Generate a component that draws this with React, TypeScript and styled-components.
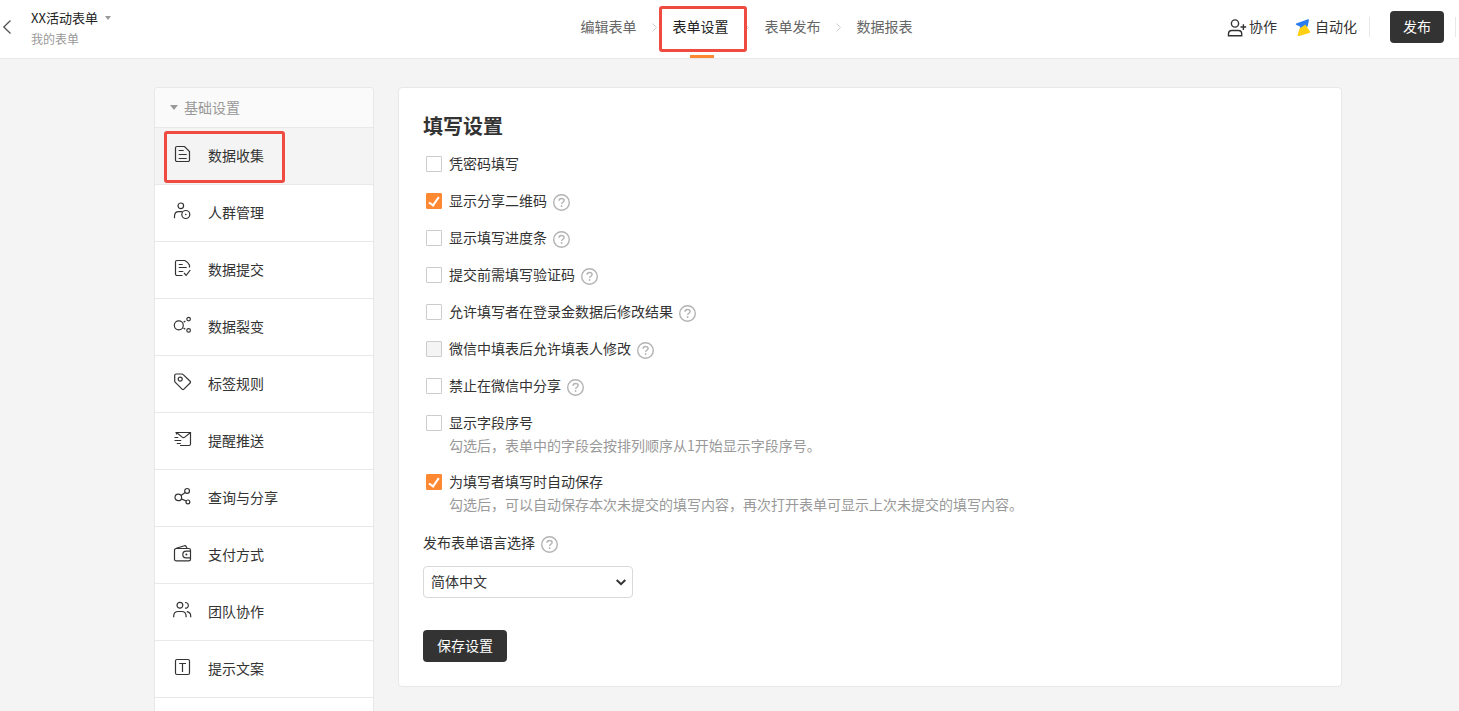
import React from "react";
import styled, { createGlobalStyle } from "styled-components";

const GlobalStyle = createGlobalStyle`
  *, *::before, *::after { box-sizing: border-box; }
  body {
    margin: 0;
    background: #f4f4f4;
    color: #333;
    font: 14px/24px "Noto Sans CJK SC", "Liberation Sans", sans-serif;
  }
  button, select, input { font: inherit; color: inherit; margin: 0; }
  a { color: inherit; text-decoration: none; }
  ul, ol { list-style: none; margin: 0; padding: 0; }
`;

const Page = styled.div`
  display: flex;
  flex-direction: column;
  min-height: 100vh;
`;

/* One line of label text, raised slightly against the icons beside it. */
const Text = styled.span`
  display: block;
  padding-bottom: 2px;
  line-height: 22px;
`;

/* ---------- top bar ---------- */

const TopBar = styled.header`
  display: flex;
  align-items: stretch;
  height: 59px;
  background: #fff;
  border-bottom: 1px solid #e8e8e8;
`;

const TopLeft = styled.div`
  flex: 1 1 37px;
  display: flex;
  align-items: center;
  padding-bottom: 2px;
`;

const BackButton = styled.button`
  display: flex;
  align-items: center;
  width: 31px;
  height: 100%;
  padding: 0 0 2px 2px;
  border: 0;
  background: none;
  cursor: pointer;
`;

const FormName = styled.button`
  display: flex;
  align-items: center;
  gap: 7px;
  padding: 0;
  border: 0;
  background: none;
  font-size: 13px;
  line-height: 21px;
  color: #222;
  cursor: pointer;
`;

const FolderName = styled.a`
  display: block;
  font-size: 12px;
  line-height: 21px;
  color: #999;
`;

const Caret = styled.span<{ $size: number }>`
  border: ${(p) => p.$size}px solid transparent;
  border-top: ${(p) => p.$size + 1}px solid #999;
  border-bottom: 0;
`;

const Steps = styled.ol`
  display: flex;
`;

const Step = styled.li`
  position: relative;
  display: flex;
  align-items: center;
  padding-bottom: 4px;
`;

const StepLink = styled.a<{ $active?: boolean }>`
  color: ${(p) => (p.$active ? "#222" : "#666")};
`;

const StepArrow = styled.li`
  display: flex;
  align-items: center;
  justify-content: center;
  width: 36px;
  padding-bottom: 4px;
`;

const ActiveBar = styled.span`
  position: absolute;
  left: 17px;
  bottom: 0;
  width: 24px;
  height: 3px;
  background: #ff8933;
`;

const Highlight = styled.span`
  position: absolute;
  border: 3px solid #ef4b41;
  border-radius: 3px;
  pointer-events: none;
`;

const StepHighlight = styled(Highlight)`
  top: 6px;
  left: -14px;
  width: 88px;
  height: 46px;
`;

const MenuHighlight = styled(Highlight)`
  top: 3px;
  left: 9px;
  width: 121px;
  height: 52px;
`;

const TopRight = styled.div`
  flex: 1 1 0;
  display: flex;
  align-items: center;
  justify-content: flex-end;
  padding: 0 3px 4px 0;
`;

const ToolLink = styled.a`
  display: flex;
  align-items: center;
  gap: 2px;
  & + & { margin-left: 18px; }
`;

const Divider = styled.span`
  width: 1px;
  height: 20px;
  margin-left: 12px;
  background: #e8e8e8;

  &:last-child { margin-left: 11px; }
`;

const DarkButton = styled.button`
  height: 32px;
  padding: 0 14px 2px;
  border: 0;
  border-radius: 4px;
  background: #333;
  color: #fff;
  line-height: 30px;
  cursor: pointer;
`;

const PublishButton = styled(DarkButton)`
  margin-left: 20px;
  padding: 0 13px 2px;
`;

/* ---------- body ---------- */

const Workspace = styled.div`
  flex: 1;
  display: flex;
  gap: 24px;
  padding: 28px 117px 0 154px;
`;

const Sidebar = styled.nav`
  flex: 0 0 220px;
  background: #fff;
  border: 1px solid #e8e8e8;
  border-bottom: 0;
  border-radius: 4px 4px 0 0;
`;

const GroupButton = styled.button`
  display: flex;
  align-items: center;
  gap: 6px;
  width: 100%;
  height: 40px;
  padding: 0 15px;
  border: 0;
  border-bottom: 1px solid #e8e8e8;
  border-radius: 4px 4px 0 0;
  background: #fafafa;
  color: #999;
  cursor: pointer;
`;

const MenuItem = styled.li`
  position: relative;
  border-bottom: 1px solid #e8e8e8;
`;

const MenuLink = styled.a<{ $active?: boolean }>`
  display: flex;
  align-items: center;
  gap: 16px;
  height: 56px;
  padding-left: 17px;
  background: ${(p) => (p.$active ? "#f4f4f4" : "#fff")};
`;

const Panel = styled.main`
  flex: 1;
  align-self: flex-start;
  padding: 24px;
  background: #fff;
  border: 1px solid #e8e8e8;
  border-radius: 4px;
`;

const PanelTitle = styled.h1`
  margin: 0 0 12px;
  font-size: 20px;
  line-height: 28px;
  font-weight: 700;
`;

const Option = styled.div`
  margin-bottom: 13px;
`;

const OptionRow = styled.div`
  display: flex;
  align-items: center;
  gap: 6px;
`;

const OptionLabel = styled.label`
  display: flex;
  align-items: center;
  gap: 7px;
  padding-left: 3px;
`;

const LanguageRow = styled(OptionRow)`
  padding-top: 2px;
  margin-bottom: 11px;
`;

const Checkbox = styled.input`
  appearance: none;
  display: grid;
  place-items: center;
  width: 16px;
  height: 16px;
  border: 1px solid #ccc;
  border-radius: 1px;
  background: #fff;

  &:checked {
    border-color: #ff8933;
    background: #ff8933;
  }
  &:checked::after {
    content: "";
    width: 6px;
    height: 11px;
    margin-bottom: 2px;
    border: solid #fff;
    border-width: 0 2px 2px 0;
    transform: rotate(35deg);
  }
  &:disabled { background: #f4f4f4; }
`;

const Hint = styled.p`
  margin: 0;
  padding: 0 0 2px 26px;
  line-height: 20px;
  color: #999;
`;

const HelpButton = styled.button`
  display: flex;
  padding: 2px 0 0;
  border: 0;
  background: none;
  cursor: help;
`;

const SelectBox = styled.div`
  position: relative;
  width: 210px;
  margin-bottom: 32px;

  svg {
    position: absolute;
    top: 13px;
    right: 7px;
    pointer-events: none;
  }
`;

const LanguageSelect = styled.select`
  appearance: none;
  display: block;
  width: 100%;
  height: 32px;
  padding: 0 24px 2px 7px;
  border: 1px solid #d9d9d9;
  border-radius: 4px;
  background: #fff;
`;

/* ---------- icons ---------- */

const Help = () => (
  <HelpButton type="button" aria-label="帮助">
    <svg width="17" height="17" viewBox="0 0 17 17" fill="none" stroke="#b3b3b3" aria-hidden="true">
      <circle cx="8.5" cy="8.5" r="7.8" strokeWidth="1.4" />
      <path d="M6 6.8C6 5.300 7.100 4.500 8.600 4.500s2.500.9 2.500 2.100c0 1.600-2.400 1.700-2.400 3.300" strokeWidth="1.4" />
      <circle cx="8.6" cy="12" r=".9" fill="#b3b3b3" stroke="none" />
    </svg>
  </HelpButton>
);

const Line = ({ children, weight = 1.2 }: { children: React.ReactNode; weight?: number }) => (
  <svg
    width="20"
    height="20"
    viewBox="0 0 20 20"
    fill="none"
    stroke="#333"
    strokeWidth={weight}
    overflow="visible"
    aria-hidden="true"
  >
    {children}
  </svg>
);

const icons = {
  document: (
    <Line>
      <path d="M12.5.5H5A1.5 1.5 0 0 0 3.5 2v12A1.5 1.5 0 0 0 5 15.5h11a1.5 1.5 0 0 0 1.5-1.500V5.500z" />
      <path d="M6.7 4.5h5M6.7 8.500h8M6.7 12.500h8" />
    </Line>
  ),
  crowd: (
    <Line>
      <circle cx="8.8" cy="2.8" r="2.8" />
      <path d="M2.5 15.3v-1.8c0-3 1.8-4.8 4.3-4.8h3.7" />
      <circle cx="13.8" cy="11.5" r="4" />
      <circle cx="13.8" cy="11.5" r=".8" fill="#333" stroke="none" />
    </Line>
  ),
  submit: (
    <Line>
      <path d="M10.5 15.5H5A1.5 1.5 0 0 1 3.5 14V2A1.5 1.5 0 0 1 5 .5h7.800c2 1 4 2.700 4.700 4.800v2.200" />
      <path d="M6.7 4.5h4M6.7 7.500h8M6.7 11.500h4.600M12 13l2.200 2.400L18.300 10" />
    </Line>
  ),
  fission: (
    <Line>
      <circle cx="6.8" cy="8.3" r="4.5" />
      <circle cx="16.6" cy="2.1" r="1.8" />
      <circle cx="16.6" cy="13.4" r="1.8" />
      <path d="M11.6 5.2l1.8-1.3M11.5 11l1.8 1.3" />
    </Line>
  ),
  tag: (
    <Line>
      <path d="M2.7 1.5A1.5 1.5 0 0 1 4.2 0h5.6c.6 0 1 .2 1.4.6l6.9 6.6c.6.6.6 1.2 0 1.8l-6.2 6.1c-.6.6-1.2.6-1.8 0L3.3 8.4c-.4-.4-.6-.8-.6-1.4z" />
      <circle cx="8.2" cy="5.2" r="2" />
    </Line>
  ),
  mail: (
    <Line>
      <path d="M8 14.5h9a1.5 1.5 0 0 0 1.5-1.5V1.500H4.500l5.700 4.600c.9.7 1.700.7 2.600 0l5.700-4.600" />
      <path d="M4.5 1.5v2M2.5 6.500h3.800M2.5 9.500h6.800M4.8 12.500h4" />
    </Line>
  ),
  share: (
    <Line>
      <circle cx="6.3" cy="9.4" r="3.3" />
      <circle cx="15.1" cy="2.9" r="2.4" />
      <circle cx="15.9" cy="13.9" r="1.9" />
      <path d="M9 7.4l4.2-3M9.3 10.9l4.9 2.1" />
    </Line>
  ),
  wallet: (
    <Line>
      <path d="M4.2 3.5h12.6a1.7 1.7 0 0 1 1.7 1.7v9a1.7 1.7 0 0 1-1.7 1.7H4.2a1.7 1.7 0 0 1-1.7-1.7v-9a1.7 1.7 0 0 1 1.7-1.7z" />
      <path d="M4.2 3.3l8.3-2.6c.7-.2 1.2 0 1.5.6l1 2M18.5 6.2h-4.4a3.3 3.3 0 0 0 0 6.6h4.4" />
      <circle cx="14.4" cy="9.5" r="1" fill="#333" stroke="none" />
    </Line>
  ),
  team: (
    <Line>
      <circle cx="7.9" cy="3.3" r="2.9" />
      <path d="M13 .5c2 0 3.3 1.2 3.3 2.900S15 6.200 13 6.200" />
      <path d="M1.700 15.300v-1.200c0-2.700 1.900-4.600 4.600-4.600h3.200c2.700 0 4.600 1.900 4.600 4.600v1.200M14.800 9.700c2.500.3 3.900 2 3.900 4.400v1.200" />
    </Line>
  ),
  text: (
    <Line>
      <rect x="3.5" y=".5" width="14" height="15" rx="1.5" />
      <path d="M7.2 4.500h6.800M10.500 4.500v8.500" />
    </Line>
  ),
};

const StepChevron = () => (
  <svg width="5" height="9" viewBox="0 0 5 9" fill="none" stroke="#ccc" aria-hidden="true">
    <path d="M.5.5l4 4-4 4" />
  </svg>
);

/* ---------- data ---------- */

const steps = ["编辑表单", "表单设置", "表单发布", "数据报表"];
const activeStep = "表单设置";

const menu: { label: string; icon: keyof typeof icons }[] = [
  { label: "数据收集", icon: "document" },
  { label: "人群管理", icon: "crowd" },
  { label: "数据提交", icon: "submit" },
  { label: "数据裂变", icon: "fission" },
  { label: "标签规则", icon: "tag" },
  { label: "提醒推送", icon: "mail" },
  { label: "查询与分享", icon: "share" },
  { label: "支付方式", icon: "wallet" },
  { label: "团队协作", icon: "team" },
  { label: "提示文案", icon: "text" },
];
const activeMenu = "数据收集";

type OptionData = {
  id: string;
  label: string;
  checked?: boolean;
  disabled?: boolean;
  help?: boolean;
  hint?: string;
};

const options: OptionData[] = [
  { id: "password", label: "凭密码填写" },
  { id: "qrcode", label: "显示分享二维码", checked: true, help: true },
  { id: "progress", label: "显示填写进度条", help: true },
  { id: "captcha", label: "提交前需填写验证码", help: true },
  { id: "edit-login", label: "允许填写者在登录金数据后修改结果", help: true },
  { id: "edit-wechat", label: "微信中填表后允许填表人修改", disabled: true, help: true },
  { id: "no-share", label: "禁止在微信中分享", help: true },
  {
    id: "numbering",
    label: "显示字段序号",
    hint: "勾选后，表单中的字段会按排列顺序从1开始显示字段序号。",
  },
  {
    id: "autosave",
    label: "为填写者填写时自动保存",
    checked: true,
    hint: "勾选后，可以自动保存本次未提交的填写内容，再次打开表单可显示上次未提交的填写内容。",
  },
];

export default function App() {
  return (
    <Page>
      <GlobalStyle />
      <TopBar>
        <TopLeft>
          <BackButton type="button" aria-label="返回">
            <svg width="10" height="14" viewBox="0 0 10 14" fill="none" stroke="#555" strokeWidth="1.3" aria-hidden="true">
              <path d="M8.5.5L1.8 7l6.7 6.5" />
            </svg>
          </BackButton>
          <div>
            <FormName type="button">
              XX活动表单
              <Caret $size={3} />
            </FormName>
            <FolderName href="#">我的表单</FolderName>
          </div>
        </TopLeft>

        <Steps>
          {steps.map((step, i) => (
            <React.Fragment key={step}>
              {i > 0 && (
                <StepArrow aria-hidden="true">
                  <StepChevron />
                </StepArrow>
              )}
              <Step>
                <StepLink href="#" $active={step === activeStep}>
                  <Text>{step}</Text>
                </StepLink>
                {step === activeStep && (
                  <>
                    <ActiveBar />
                    <StepHighlight />
                  </>
                )}
              </Step>
            </React.Fragment>
          ))}
        </Steps>

        <TopRight>
          <ToolLink href="#">
            <Line weight={1.4}>
              <circle cx="8" cy="6.5" r="3.6" />
              <path d="M1.5 18.7v-1.900c0-2 1.400-3.300 3.400-3.300h6.400c2 0 3.400 1.300 3.400 3.300v1.900zM13.500 10h5.700M16.400 7.200v5.700" />
            </Line>
            <Text>协作</Text>
          </ToolLink>
          <ToolLink href="#">
            <svg width="18" height="18" viewBox="0 0 18 18" aria-hidden="true">
              <path d="M1.200 5.400L13 1.300c.7-.2 1.100.2 1 .8l-1.400 6.500-7.800 2.600.5-2.400-3.700-1.800c-.9-.5-1.100-1.300-.4-1.600z" fill="#2b7cf0" />
              <path d="M10.300 6.400l4.600 6.900c.4.700.2 1.300-.5 1.600L4 18.100c-1 .3-1.700-.4-1.400-1.400l2-6.100z" fill="#ffd012" />
            </svg>
            <Text>自动化</Text>
          </ToolLink>
          <Divider />
          <PublishButton type="button">发布</PublishButton>
          <Divider />
        </TopRight>
      </TopBar>

      <Workspace>
        <Sidebar>
          <GroupButton type="button">
            <Caret $size={4} />
            <Text>基础设置</Text>
          </GroupButton>
          <ul>
            {menu.map(({ label, icon }) => (
              <MenuItem key={label}>
                <MenuLink href="#" $active={label === activeMenu}>
                  {icons[icon]}
                  <Text>{label}</Text>
                </MenuLink>
                {label === activeMenu && <MenuHighlight />}
              </MenuItem>
            ))}
          </ul>
        </Sidebar>

        <Panel>
          <PanelTitle>填写设置</PanelTitle>
          {options.map((o) => (
            <Option key={o.id}>
              <OptionRow>
                <OptionLabel htmlFor={o.id}>
                  <Checkbox type="checkbox" id={o.id} defaultChecked={o.checked} disabled={o.disabled} />
                  <Text>{o.label}</Text>
                </OptionLabel>
                {o.help && <Help />}
              </OptionRow>
              {o.hint && <Hint>{o.hint}</Hint>}
            </Option>
          ))}
          <LanguageRow>
            <label htmlFor="language">
              <Text>发布表单语言选择</Text>
            </label>
            <Help />
          </LanguageRow>
          <SelectBox>
            <LanguageSelect id="language" defaultValue="zh-CN">
              <option value="zh-CN">简体中文</option>
            </LanguageSelect>
            <svg width="10" height="7" viewBox="0 0 10 7" fill="none" stroke="#333" strokeWidth="2" aria-hidden="true">
              <path d="M.7 1L5 5.200 9.300 1" />
            </svg>
          </SelectBox>
          <DarkButton type="button">保存设置</DarkButton>
        </Panel>
      </Workspace>
    </Page>
  );
}
